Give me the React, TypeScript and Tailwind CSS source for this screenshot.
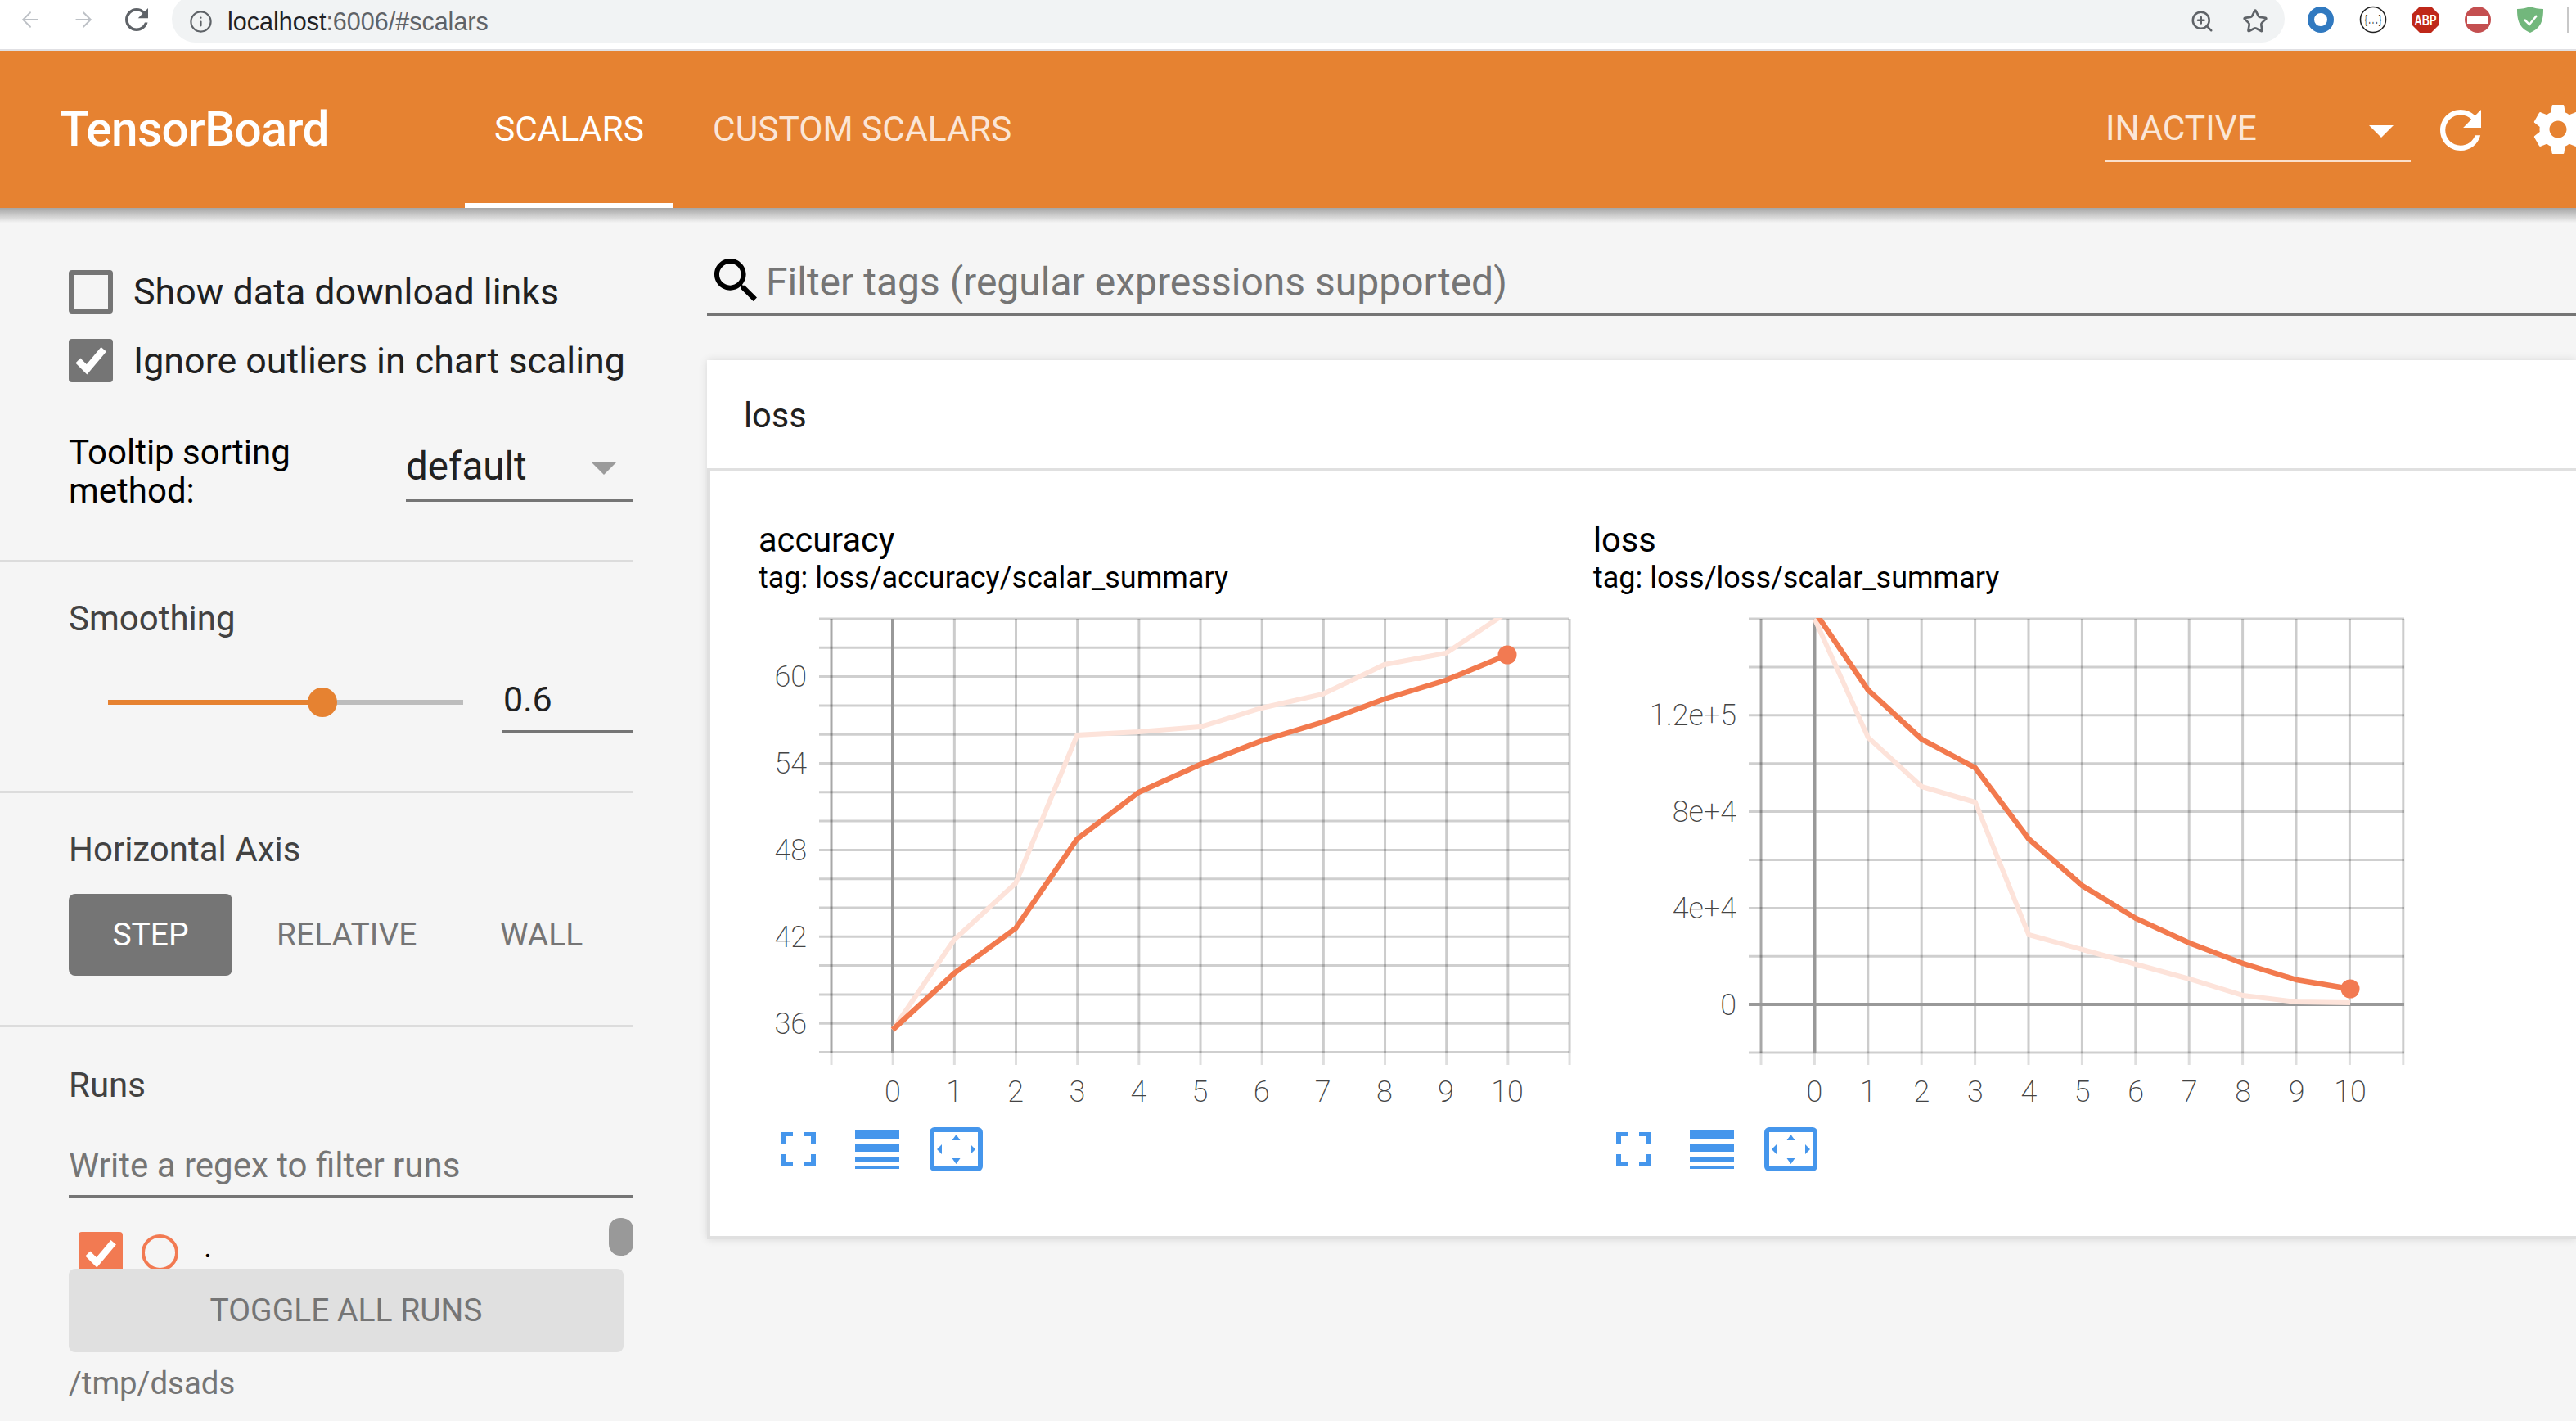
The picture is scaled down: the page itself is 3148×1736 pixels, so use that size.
import { ArrowLeft, ArrowRight, Info, Star, ZoomIn } from "lucide-react";

const refreshPath =
  "M17.65 6.35C16.2 4.9 14.21 4 12 4c-4.42 0-7.99 3.58-7.99 8s3.57 8 7.99 8c3.73 0 6.84-2.55 7.73-6h-2.08c-.82 2.33-3.04 4-5.65 4-3.31 0-6-2.69-6-6s2.69-6 6-6c1.66 0 3.14.69 4.22 1.78L13 11h7V4l-2.35 2.35z";
const gearPath =
  "M19.43 12.98c.04-.32.07-.64.07-.98s-.03-.66-.07-.98l2.11-1.65c.19-.15.24-.42.12-.64l-2-3.46c-.12-.22-.39-.3-.61-.22l-2.49 1c-.52-.4-1.08-.73-1.69-.98l-.38-2.65C14.46 2.18 14.25 2 14 2h-4c-.25 0-.46.18-.49.42l-.38 2.65c-.61.25-1.17.59-1.69.98l-2.49-1c-.23-.09-.49 0-.61.22l-2 3.46c-.13.22-.07.49.12.64l2.11 1.65c-.04.32-.07.65-.07.98s.03.66.07.98l-2.11 1.65c-.19.15-.24.42-.12.64l2 3.46c.12.22.39.3.61.22l2.49-1c.52.4 1.08.73 1.69.98l.38 2.65c.03.24.24.42.49.42h4c.25 0 .46-.18.49-.42l.38-2.65c.61-.25 1.17-.59 1.69-.98l2.49 1c.23.09.49 0 .61-.22l2-3.46c.12-.22.07-.49-.12-.64l-2.11-1.65zM12 15.5c-1.93 0-3.5-1.57-3.5-3.5s1.57-3.5 3.5-3.5 3.5 1.57 3.5 3.5-1.57 3.5-3.5 3.5z";
const searchPath =
  "M15.5 14h-.79l-.28-.27C15.41 12.59 16 11.11 16 9.5 16 5.91 13.09 3 9.5 3S3 5.91 3 9.5 5.91 16 9.5 16c1.61 0 3.09-.59 4.23-1.57l.27.28v.79l5 4.99L20.49 19l-4.99-5zm-6 0C7.01 14 5 11.99 5 9.5S7.01 5 9.5 5 14 7.01 14 9.5 11.99 14 9.5 14z";

function BrowserBar() {
  return (
    <div className="flex h-[60px] shrink-0 items-start overflow-hidden bg-white">
      <ArrowLeft className="ml-[22px] mt-[9px] h-[30px] w-[30px] text-[#bdc1c6]" strokeWidth={1.5} />
      <ArrowRight className="ml-[35px] mt-[9px] h-[30px] w-[30px] text-[#bdc1c6]" strokeWidth={1.5} />
      <svg viewBox="4 4 16 16" className="ml-[36px] mt-[10px] h-[28px] w-[28px] fill-[#5f6368]">
        <path d={refreshPath} />
      </svg>
      <div className="ml-[29px] -mt-[6px] flex h-[58px] w-[2582px] items-center rounded-full bg-[#f1f3f4] pt-[6px]">
        <Info className="ml-[21px] h-[29px] w-[29px] text-[#5f6368]" strokeWidth={1.8} />
        <span className="ml-[18px] font-['Liberation_Sans',sans-serif] text-[30.5px] leading-[32px] text-[#5f6368]">
          <span className="text-[#202124]">localhost</span>:6006/#scalars
        </span>
        <ZoomIn className="ml-auto h-[30px] w-[30px] text-[#5f6368]" strokeWidth={2} />
        <Star className="ml-[34px] mr-[20px] h-[32px] w-[32px] text-[#5f6368]" strokeWidth={2} />
      </div>
      <svg viewBox="0 0 356 60" className="h-[60px] w-[356px] shrink-0">
        <circle cx="44" cy="24" r="12" fill="none" stroke="#3079c0" strokeWidth="8" />
        <circle cx="108" cy="24" r="15.5" fill="#fff" stroke="#222" strokeWidth="1.6" />
        <text x="108" y="29" textAnchor="middle" fontSize="14" fontFamily="Liberation Mono, monospace" fill="#222" textLength="22" lengthAdjust="spacingAndGlyphs">
          {"{...}"}
        </text>
        <polygon points="165,8 179,8 188,17 188,31 179,40 165,40 156,31 156,17" fill="#bf2819" />
        <text x="172" y="31" textAnchor="middle" fontSize="19" fontWeight="700" fontFamily="Liberation Sans, sans-serif" fill="#fff" textLength="27" lengthAdjust="spacingAndGlyphs">
          ABP
        </text>
        <circle cx="236" cy="24" r="16" fill="#c44f50" />
        <rect x="223" y="20" width="26" height="9" fill="#fff" />
        <path d="M300 8c5 2 10 3 16 3 0 13-2 23-16 29-14-6-16-16-16-29 6 0 11-1 16-3z" fill="#72b77c" />
        <path d="M293 24l6 6 9-11" fill="none" stroke="#fff" strokeWidth="2.5" />
        <rect x="345" y="8" width="2" height="32" fill="#c8c8c8" />
      </svg>
    </div>
  );
}

function Header() {
  return (
    <header className="flex h-[192px] shrink-0 items-stretch overflow-hidden bg-[#e68231] text-white">
      <div className="ml-[73px] flex w-[495px] shrink-0 items-center pt-[2px] text-[58.5px] font-medium tracking-[-0.6px]">
        TensorBoard
      </div>
      <div className="flex w-[255px] shrink-0 items-center justify-center border-b-[6px] border-white pt-[6px] text-[42.5px]">
        SCALARS
      </div>
      <div className="ml-[48px] flex w-[1653px] shrink-0 items-center text-[42.5px] text-[#fbe6d6]">CUSTOM SCALARS</div>
      <div className="ml-[48px] mt-[64px] flex h-[72px] w-[374px] shrink-0 items-center justify-between border-b-[3px] border-[#fbe0cb] text-[42.5px] text-[#fbe6d6]">
        <span className="ml-[1px] -mt-[8px]">INACTIVE</span>
        <svg viewBox="0 0 30 15" className="mr-[21px] h-[15px] w-[30px] fill-white">
          <path d="M0 0h30L15 15z" />
        </svg>
      </div>
      <svg viewBox="4 4 16 16" className="ml-[36px] mt-[72px] h-[50px] w-[50px] shrink-0 fill-white">
        <path d={refreshPath} />
      </svg>
      <svg viewBox="0 0 24 24" className="ml-[58px] mt-[60px] h-[72px] w-[72px] shrink-0 fill-white">
        <path d={gearPath} />
      </svg>
    </header>
  );
}

function CheckMark() {
  return (
    <svg viewBox="0 0 54 54" className="h-full w-full">
      <path d="M11 27l11 11 21-25" fill="none" stroke="#fff" strokeWidth="8.5" />
    </svg>
  );
}

function Sidebar() {
  return (
    <aside className="w-[774px] shrink-0 text-[44.8px]">
      <section className="h-[415px] border-b-[3px] border-[#dcdcdc] pl-[84px] pt-[58px]">
        <div className="flex h-[53px] items-center">
          <span className="h-[53px] w-[54px] rounded-[4px] border-[6px] border-[#757575]" />
          <span className="ml-[25px] text-[#212121]">Show data download links</span>
        </div>
        <div className="mt-[31px] flex h-[53px] items-center">
          <span className="h-[53px] w-[54px] rounded-[4px] bg-[#757575]">
            <CheckMark />
          </span>
          <span className="ml-[25px] text-[#212121]">Ignore outliers in chart scaling</span>
        </div>
        <div className="mt-[62px] flex items-start">
          <div className="w-[412px] text-[42px] leading-[47px] text-black">
            Tooltip sorting
            <br />
            method:
          </div>
          <div className="flex h-[84px] w-[278px] items-center justify-between border-b-[3px] border-[#757575] pt-[3px]">
            <span className="text-[47.5px] text-[#212121]">default</span>
            <svg viewBox="0 0 30 15" className="mr-[21px] mt-[3px] h-[15px] w-[30px] fill-[#9b9b9b]">
              <path d="M0 0h30L15 15z" />
            </svg>
          </div>
        </div>
      </section>

      <section className="h-[282px] border-b-[3px] border-[#dcdcdc] pl-[84px] pt-[43px]">
        <div className="text-[42px] leading-[52px] text-[#424242]">Smoothing</div>
        <div className="mt-[38px] flex h-[75px] items-stretch">
          <div className="relative ml-[48px] flex w-[434px] items-center">
            <div className="h-[6px] w-[262px] bg-[#e68231]" />
            <div className="h-[6px] flex-1 bg-[#bdbdbd]" />
            <div className="absolute left-[244px] top-[20px] h-[36px] w-[36px] rounded-full bg-[#e68231]" />
          </div>
          <div className="ml-[48px] flex w-[160px] items-center border-b-[3px] border-[#757575] pb-[4px] pl-[1px] text-[43px] text-[#212121]">
            0.6
          </div>
        </div>
      </section>

      <section className="h-[286px] border-b-[3px] border-[#dcdcdc] pl-[84px] pt-[43px]">
        <div className="text-[42px] leading-[52px] text-[#424242]">Horizontal Axis</div>
        <div className="mt-[28px] flex h-[100px] items-center text-[39px] text-[#757575]">
          <div className="flex h-[100px] w-[200px] items-center justify-center rounded-[8px] bg-[#757575] text-white">
            STEP
          </div>
          <div className="ml-[54px] w-[170px] text-center">RELATIVE</div>
          <div className="ml-[103px]">WALL</div>
        </div>
      </section>

      <section className="pl-[84px] pt-[45px]">
        <div className="text-[42px] leading-[52px] text-[#424242]">Runs</div>
        <div className="flex h-[112px] items-center border-b-[4px] border-[#757575] pt-[34px] text-[42px] text-[#757575]">
          Write a regex to filter runs
        </div>
        <div className="relative h-[86px] overflow-hidden">
          <span className="absolute left-[12px] top-[41px] h-[53px] w-[54px] rounded-[4px] bg-[#f27a52]">
            <CheckMark />
          </span>
          <span className="absolute left-[89px] top-[44px] h-[45px] w-[45px] rounded-full border-[4px] border-[#f27a52]" />
          <span className="absolute left-[165px] top-[34px] text-[38px] leading-[50px] text-black">.</span>
          <span className="absolute right-0 top-[24px] h-[46px] w-[30px] rounded-[14px] bg-[#999999]" />
        </div>
        <div className="flex h-[102px] w-[678px] items-center justify-center rounded-[8px] bg-[#e0e0e0] text-[39px] text-[#757575]">
          TOGGLE ALL RUNS
        </div>
        <div className="mt-[13px] text-[38.4px] leading-[50px] text-[#757575]">/tmp/dsads</div>
      </section>
    </aside>
  );
}

type ChartProps = {
  title: string;
  tag: string;
  left: number;
  right: number;
  originX: number;
  hLines: number[];
  vLines: number[];
  zeroX: number;
  zeroY?: number;
  yLabels: { y: number; text: string }[];
  labelRight: number;
  stepX: number;
  main: number[];
  light: number[];
};

function Chart(props: ChartProps) {
  const { left, right, originX, hLines, vLines, zeroX, zeroY, yLabels, labelRight, stepX, main, light } = props;
  const pts = (ys: number[]) => ys.map((y, i) => `${zeroX + stepX * i},${y}`).join(" ");
  const lastX = zeroX + stepX * 10;
  return (
    <div className="w-[1020px] shrink-0">
      <div className="text-[41.6px] leading-[48px] text-black">{props.title}</div>
      <div className="text-[36px] leading-[44px] text-black">{props.tag}</div>
      <svg viewBox={`${originX} 740 1000 620`} className="mt-[12px] h-[620px] w-[1000px]">
        <defs>
          <clipPath id={`plot-${originX}`}>
            <rect x={left} y="755" width={right - left} height="532" />
          </clipPath>
        </defs>
        {vLines.map((x, i) => (
          <g key={x}>
            <line x1={x} x2={x} y1="756" y2="1286" stroke={i === 0 ? "#a8a8a8" : "#cccccc"} strokeWidth="3" />
            <line x1={x} x2={x} y1="1286" y2="1301" stroke="#dedede" strokeWidth="3" />
          </g>
        ))}
        {hLines.map((y) => (
          <line key={y} x1={left} x2={right} y1={y} y2={y} stroke="#000" strokeOpacity="0.19" strokeWidth="3" />
        ))}
        <line x1={zeroX} x2={zeroX} y1="756" y2="1286" stroke="#999999" strokeWidth="4" />
        {zeroY !== undefined && <line x1={left} x2={right} y1={zeroY} y2={zeroY} stroke="#999999" strokeWidth="4" />}
        <g clipPath={`url(#plot-${originX})`} fill="none" strokeLinejoin="miter">
          <polyline points={pts(light)} stroke="#fde3da" strokeWidth="6" />
          <polyline points={pts(main)} stroke="#f27a4e" strokeWidth="6.5" />
        </g>
        <circle cx={lastX} cy={main[10]} r="11.5" fill="#f27a52" />
        {yLabels.map((l) => (
          <text key={l.text} x={labelRight} y={l.y + 13} textAnchor="end" className="fill-[#444444] text-[36px] font-extralight">
            {l.text}
          </text>
        ))}
        {main.map((_, i) => (
          <text key={i} x={zeroX + stepX * i} y="1346" textAnchor="middle" className="fill-[#444444] text-[36px] font-extralight">
            {i}
          </text>
        ))}
      </svg>
      <div className="ml-[28px] mt-[17px] flex h-[54px] items-center">
        <svg viewBox="0 0 42 42" className="h-[42px] w-[42px] fill-[#4596ec]">
          <path d="M0 0h14v5H6v10H0zM28 0h14v15h-6V5h-8zM0 27h6v10h8v5H0zM36 27h6v15H28v-5h8z" />
        </svg>
        <svg viewBox="0 0 54 48" className="ml-[48px] h-[48px] w-[54px] fill-[#4596ec]">
          <path d="M0 0h54v12H0zM0 18h54v9H0zM0 33h54v6H0zM0 45h54v3H0z" />
        </svg>
        <svg viewBox="0 0 65 54" className="ml-[37px] h-[54px] w-[65px]">
          <rect x="3" y="3" width="59" height="48" rx="3" fill="none" stroke="#4596ec" strokeWidth="6" />
          <path d="M32.5 9l5 7h-10zM32.5 45l5-7h-10zM9 27l6-6v12zM56 27l-6-6v12z" fill="#4596ec" />
        </svg>
      </div>
    </div>
  );
}

const accuracyH = Array.from({ length: 16 }, (_, i) => 756 + 35.3 * i);
const accuracyV = Array.from({ length: 13 }, (_, i) => 1016 + 75.17 * i);
const lossH = Array.from({ length: 10 }, (_, i) => 756 + 58.9 * i);
const lossV = Array.from({ length: 13 }, (_, i) => 2152 + 65.4 * i);

function Main() {
  return (
    <main className="ml-[90px] min-w-0 flex-1">
      <div className="flex h-[114px] items-end border-b-[4px] border-[#757575] pb-[5px] pl-[9px]">
        <svg viewBox="3 3 17.5 17.5" className="mb-[9px] h-[52px] w-[52px] shrink-0 fill-black">
          <path d={searchPath} />
        </svg>
        <span className="ml-[11px] text-[48px] leading-[64px] text-[#757575]">Filter tags (regular expressions supported)</span>
      </div>
      <div className="mt-[54px] flex h-[1074px] flex-col border-b-[4px] border-[#e0e0e0] bg-white shadow-[0_0_10px_rgba(0,0,0,0.12)]">
        <div className="flex h-[136px] shrink-0 items-center border-b-[4px] border-[#e0e0e0] pl-[45px] pt-[4px] text-[41.6px] text-[#212121]">
          loss
        </div>
        <div className="flex flex-1 border-l-[4px] border-[#e0e0e0] pl-[59px] pt-[60px]">
          <Chart
            title="accuracy"
            tag="tag: loss/accuracy/scalar_summary"
            originX={927}
            left={1001}
            right={1918}
            hLines={accuracyH}
            vLines={accuracyV}
            zeroX={1091}
            yLabels={[
              { y: 826, text: "60" },
              { y: 932, text: "54" },
              { y: 1038, text: "48" },
              { y: 1144, text: "42" },
              { y: 1250, text: "36" },
            ]}
            labelRight={986}
            stepX={75.1}
            main={[1258, 1189, 1134, 1025, 968, 934, 905, 882, 854, 831, 800]}
            light={[1258, 1148, 1079, 898, 894, 888, 865, 848, 812, 798, 748]}
          />
          <Chart
            title="loss"
            tag="tag: loss/loss/scalar_summary"
            originX={1947}
            left={2137}
            right={2938}
            hLines={lossH}
            vLines={lossV}
            zeroX={2217.5}
            zeroY={1227}
            yLabels={[
              { y: 873, text: "1.2e+5" },
              { y: 991, text: "8e+4" },
              { y: 1109, text: "4e+4" },
              { y: 1227, text: "0" },
            ]}
            labelRight={2122}
            stepX={65.45}
            main={[747, 843, 903, 938, 1025, 1082, 1122, 1152, 1177, 1197, 1208]}
            light={[756, 901, 961, 980, 1142, 1160, 1178, 1196, 1216, 1224, 1225]}
          />
        </div>
      </div>
    </main>
  );
}

export default function App() {
  return (
    <div className="flex h-screen w-full flex-col overflow-hidden bg-[#f5f5f5] font-['Roboto',sans-serif]">
      <BrowserBar />
      <div className="h-[2px] shrink-0 bg-[#e0e0e4]" />
      <Header />
      <div className="h-[18px] shrink-0 bg-gradient-to-b from-[#a6a6a6] to-[#f3f3f3]" />
      <div className="flex min-h-0 flex-1">
        <Sidebar />
        <Main />
      </div>
    </div>
  );
}
